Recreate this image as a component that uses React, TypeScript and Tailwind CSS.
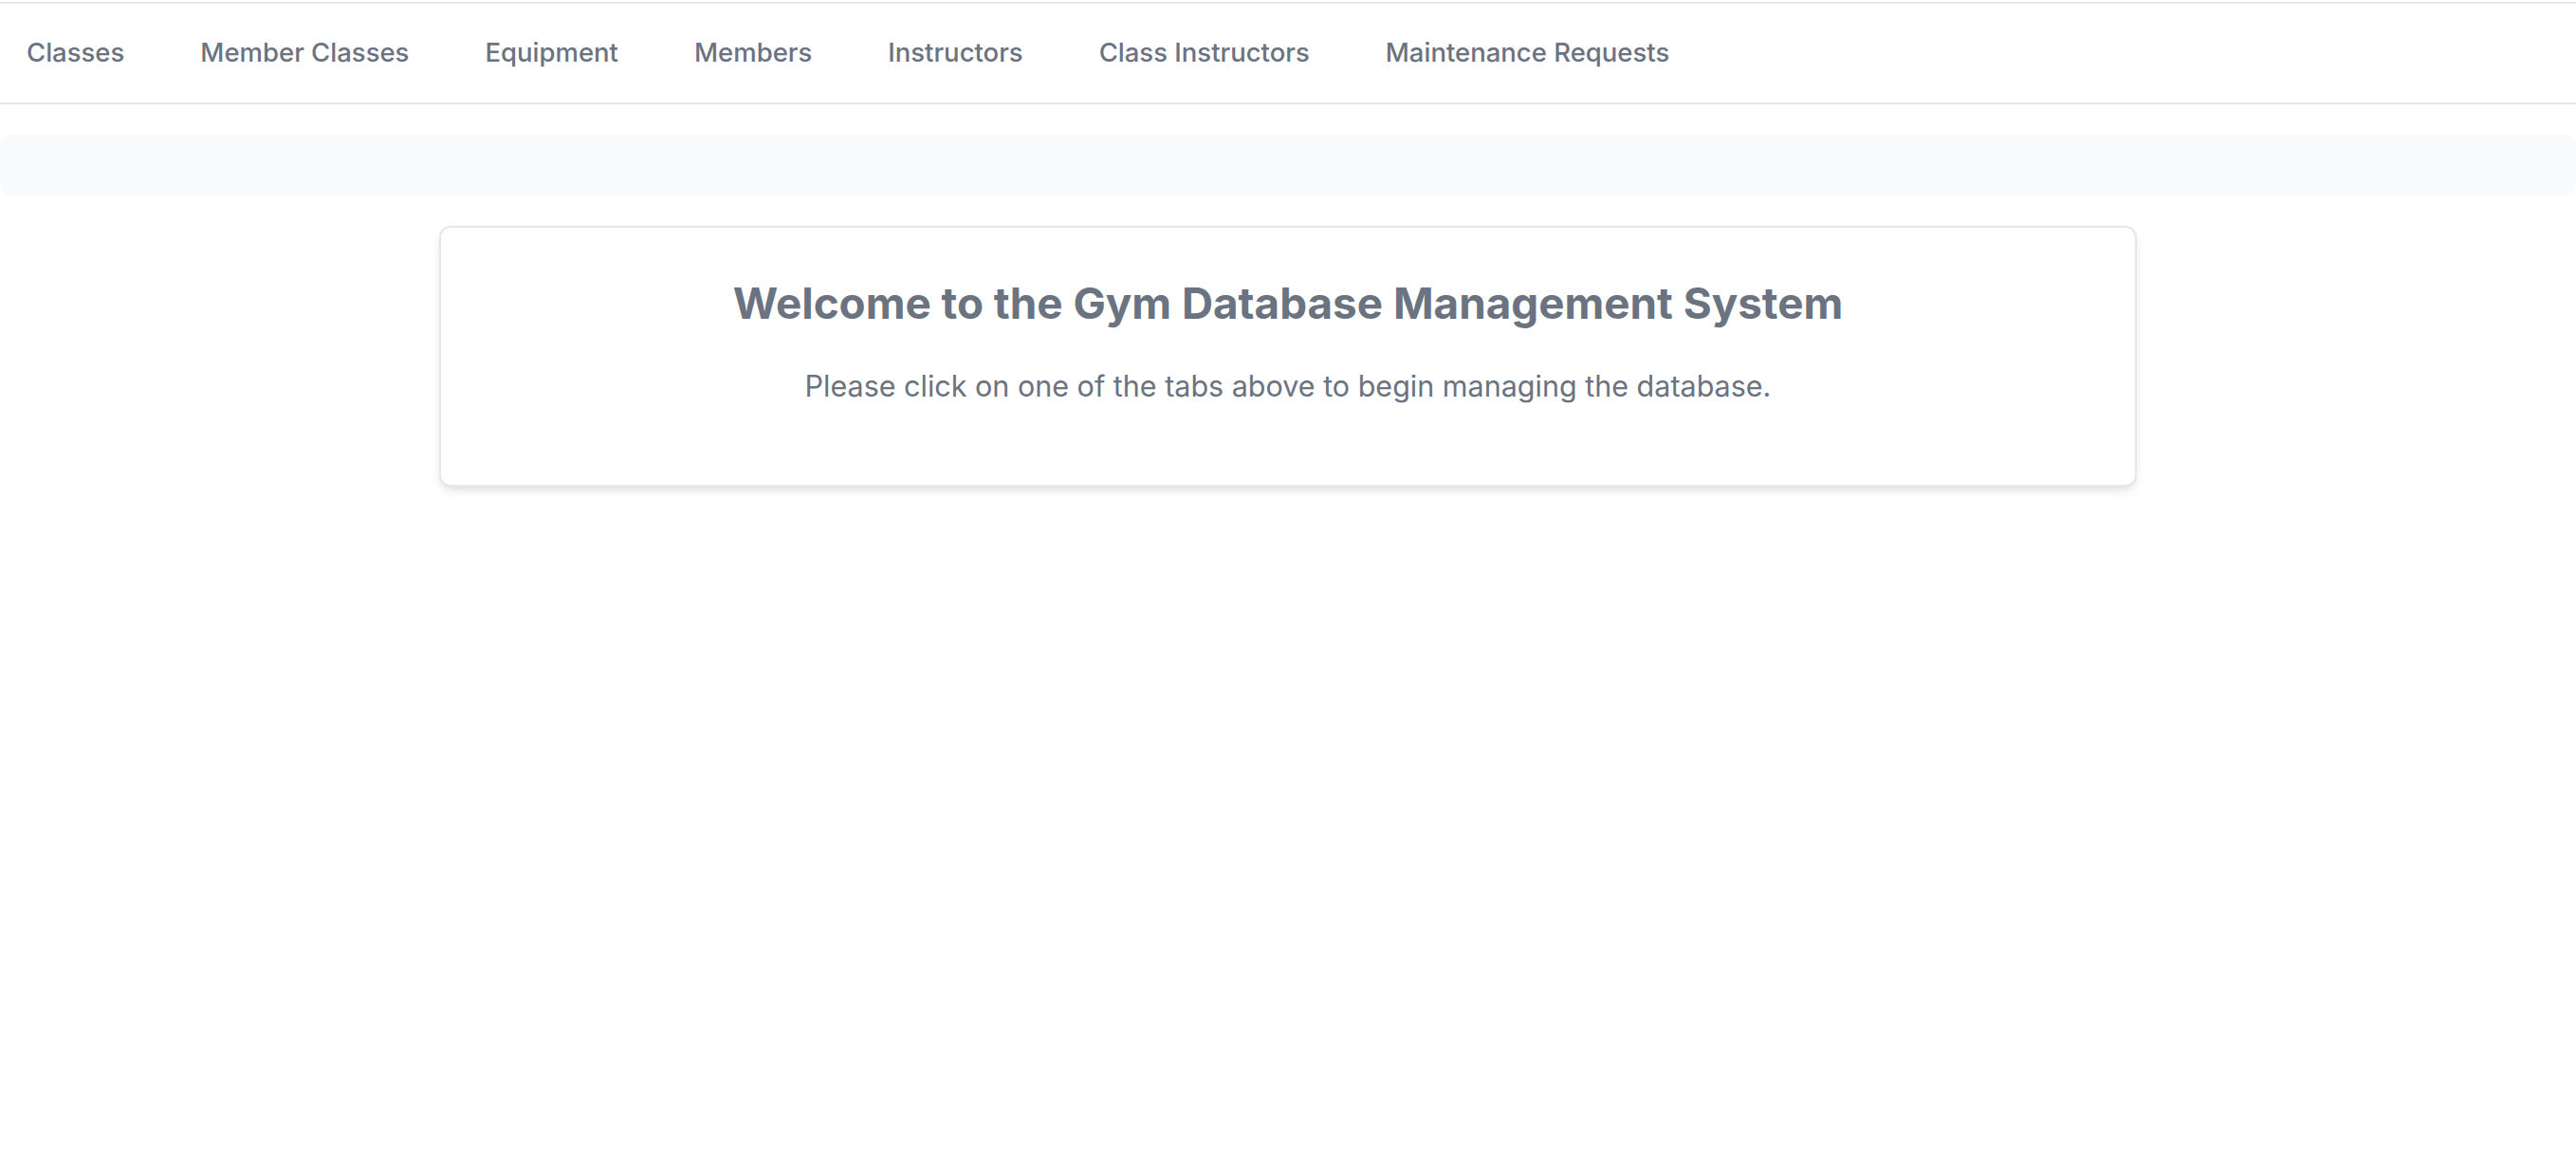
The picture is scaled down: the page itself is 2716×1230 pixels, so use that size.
const tabs = [
  "Classes",
  "Member Classes",
  "Equipment",
  "Members",
  "Instructors",
  "Class Instructors",
  "Maintenance Requests",
];

export default function App() {
  return (
    <div className="min-h-screen bg-white pt-[2px] font-['Inter','Noto_Sans',sans-serif] text-[#6b7280]">
      <nav className="flex h-[108px] items-center gap-[80px] border-y-2 border-[#e5e7eb] pl-[28px]">
        {tabs.map((t) => (
          <button
            key={t}
            type="button"
            className="text-[27.5px] font-medium leading-none text-[#6b7280]"
          >
            {t}
          </button>
        ))}
      </nav>

      <div className="mt-[32px] h-[64px] rounded-[12px] bg-[#f9fafb]" />

      <main className="mx-auto mt-[32px] w-[1790px] rounded-[12px] border-2 border-[#e5e7eb] bg-white px-[40px] pb-[82px] pt-[53px] text-center shadow-[0_6px_12px_-2px_rgba(0,0,0,0.1),0_3px_6px_-3px_rgba(0,0,0,0.08)]">
        <h1 className="text-[45.8px] font-bold leading-[54px]">
          Welcome to the Gym Database Management System
        </h1>
        <p className="mt-[37px] text-[30.5px] leading-[45px]">
          Please click on one of the tabs above to begin managing the database.
        </p>
      </main>
    </div>
  );
}
